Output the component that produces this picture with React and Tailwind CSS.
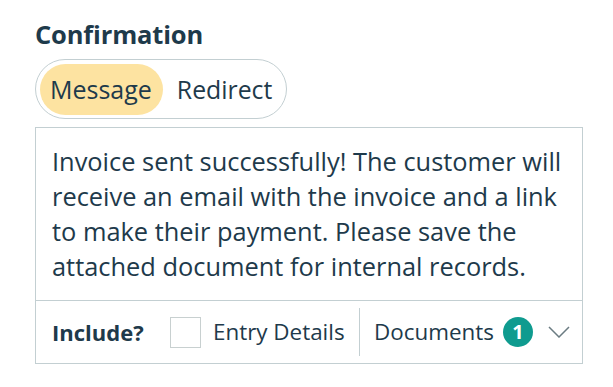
import React from "react";

export default function App() {
  return (
    <div className="w-[613px] h-[387px] bg-white text-[#1e3a4b] pl-[35px] pt-[17px]" style={{ fontFamily: '"Open Sans", "Noto Sans", sans-serif' }}>
      <div className="text-[25.5px] font-bold leading-[34px] tracking-[-0.15px]">Confirmation</div>
      <div className="mt-[8px] inline-flex items-center h-[60px] rounded-full border border-[#c3cfd2] p-[4px] pr-[14px]">
        <div className="h-[51px] flex items-center rounded-full bg-[#fde3a1] pl-[10px] pr-[11px] text-[25px] leading-none">Message</div>
        <div className="ml-[14px] text-[24.8px] leading-none">Redirect</div>
      </div>
      <div className="mt-[8px] w-[548px] border border-[#c3cfd2]">
        <div className="px-[16px] pt-[16px] pb-[16px] text-[25.4px] leading-[35px]">
          Invoice sent successfully! The customer will receive an email with the invoice and a link to make their payment. Please save the attached document for internal records.
        </div>
        <div className="h-[63px] border-t border-[#c3cfd2] flex items-center pl-[16px]">
          <div className="w-[92px] text-[22px] font-bold whitespace-nowrap">Include?</div>
          <div className="ml-[26px] w-[31px] h-[31px] border border-[#c8d0d0] bg-white shrink-0"></div>
          <div className="ml-[12px] w-[131px] text-[22.4px] whitespace-nowrap">Entry Details</div>
          <div className="ml-[15px] w-px h-[48px] bg-[#c3cfd2]"></div>
          <div className="ml-[14px] w-[120px] text-[22.4px] whitespace-nowrap">Documents</div>
          <div className="ml-[9px] w-[30px] h-[30px] rounded-full bg-[#0f9b8f] text-white font-bold text-[20px] flex items-center justify-center shrink-0">1</div>
          <svg className="ml-[15px]" width="22" height="12" viewBox="0 0 22 12" fill="none">
            <path d="M1 1 L11 11 L21 1" stroke="#6b7c82" strokeWidth="1.5" />
          </svg>
        </div>
      </div>
    </div>
  );
}
